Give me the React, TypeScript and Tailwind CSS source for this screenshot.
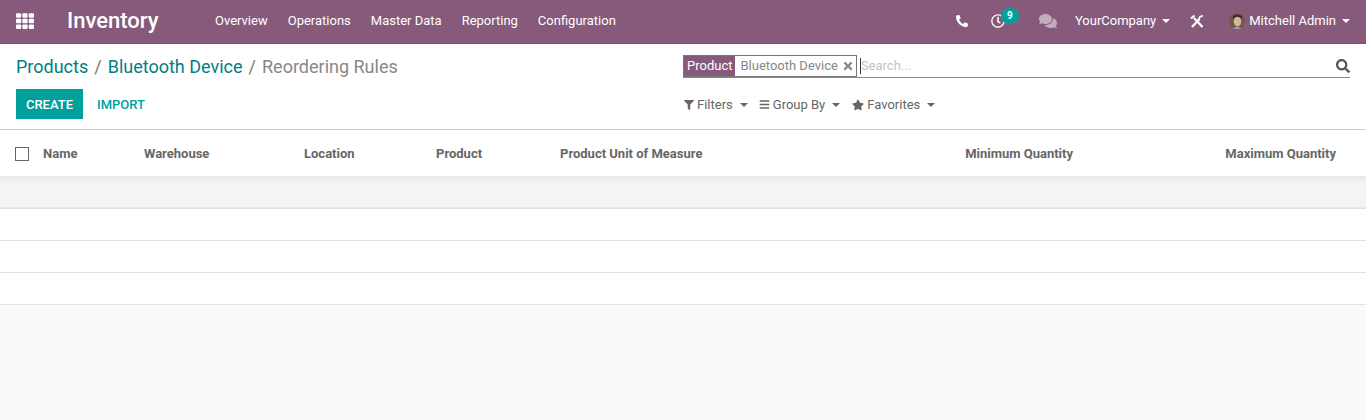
import { FaComments, FaFilter, FaBars, FaPhone, FaRegClock, FaSearch, FaStar, FaTh, FaTimes } from "react-icons/fa";

const menus = ["Overview", "Operations", "Master Data", "Reporting", "Configuration"];

function Caret({ className }: { className?: string }) {
  return <span className={`inline-block w-0 h-0 border-x-[4px] border-x-transparent border-t-[4px] ${className ?? ""}`} />;
}

function ToolsIcon() {
  return (
    <svg viewBox="0 0 14 14" className="w-[14px] h-[14px]" fill="none" stroke="white">
      <path d="M2 13 L9.5 5" strokeWidth="2.4" />
      <path d="M4 4 L12.5 13" strokeWidth="2.4" />
      <path d="M1 4.5 L4.5 1.5" strokeWidth="2.2" />
      <path d="M9 5.5 Q9 2 13 1.8" strokeWidth="1.8" />
    </svg>
  );
}

function Avatar() {
  return (
    <svg viewBox="0 0 16 16" className="w-4 h-4 rounded-full">
      <circle cx="8" cy="8" r="8" fill="#6b5a4c" />
      <ellipse cx="8.5" cy="8.5" rx="3.8" ry="5" fill="#d8b49a" />
      <path d="M4 6 Q8 1.5 13 6 L13 3 Q8 0 4 3 Z" fill="#3a2c22" />
      <path d="M2 16 Q8 12 14 16 Z" fill="#9fb2b5" />
    </svg>
  );
}

export default function App() {
  return (
    <div className="min-h-[420px] bg-[#f9f9f9] font-['Roboto',sans-serif] text-[13px] text-[#666666]">
      <header className="h-[44px] pb-[2px] bg-[#875a7b] border-b border-[#7a5170] flex items-center text-white">
        <FaTh className="ml-4 w-[18px] h-[18px]" />
        <span className="ml-[33px] w-[92px] text-[22px] leading-none font-medium whitespace-nowrap">Inventory</span>
        <nav className="ml-[56px] flex gap-[20px] text-[13px]">
          {menus.map((m) => (
            <span key={m}>{m}</span>
          ))}
        </nav>
        <div className="ml-auto flex items-center">
          <FaPhone className="w-3 h-3 -scale-x-100 mr-[23px]" />
          <span className="relative mr-[34px]">
            <FaRegClock className="w-[14px] h-[14px]" />
            <span className="absolute -top-[6px] left-[10px] w-[18px] h-[16px] rounded-full bg-[#00a09d] text-[10px] font-bold flex items-center justify-center">9</span>
          </span>
          <FaComments className="w-[18px] h-[18px] text-white/50 mr-[18px]" />
          <span>YourCompany</span>
          <Caret className="ml-[6px] border-t-white" />
          <span className="ml-[20px]"><ToolsIcon /></span>
          <span className="ml-[25px]"><Avatar /></span>
          <span className="ml-1">Mitchell Admin</span>
          <Caret className="ml-[6px] mr-[16px] border-t-white" />
        </div>
      </header>

      <section className="h-[86px] bg-white border-b border-[#cccccc] flex pl-4 pr-4">
        <div className="w-[667px] shrink-0">
          <div className="h-[45px] flex items-center text-[18px] gap-[6px]">
            <span className="text-[#017e84]">Products</span>
            <span className="text-[#777777]">/</span>
            <span className="text-[#017e84]">Bluetooth Device</span>
            <span className="text-[#777777]">/</span>
            <span className="text-[#888888]">Reordering Rules</span>
          </div>
          <div className="flex items-center h-[30px]">
            <button className="h-[30px] w-[67px] pt-px bg-[#00a09d] text-white text-[13px] font-medium">CREATE</button>
            <button className="ml-[14px] pt-px text-[#00a09d] text-[13px] font-medium">IMPORT</button>
          </div>
        </div>
        <div className="flex-1 min-w-0">
          <div className="mt-[10px] h-[24px] border-b border-[#888888] flex items-center">
            <span className="h-[22px] flex border border-[#777777] pt-px">
              <span className="bg-[#875a7b] -mt-px text-white px-[3px] flex items-center">Product</span>
              <span className="pl-[5px] pr-[2px] flex items-center gap-[4px] text-[#888888]">
                Bluetooth Device
                <FaTimes className="w-[12px] h-[12px]" />
              </span>
            </span>
            <span className="ml-[3px] border-l border-[#333333] h-[16px] leading-[16px] text-[#c4c4c4]">Search...</span>
            <FaSearch className="ml-auto w-[14px] h-[14px] text-[#555555]" />
          </div>
          <div className="mt-[17px] flex items-center">
            <FaFilter className="w-[10px] h-[10px] ml-px" />
            <span className="ml-[3px]">Filters</span>
            <Caret className="ml-[7px] border-t-[#666666]" />
            <FaBars className="ml-[11px] w-[11px] h-[11px]" />
            <span className="ml-[3px]">Group By</span>
            <Caret className="ml-[7px] border-t-[#666666]" />
            <FaStar className="ml-[12px] w-[12px] h-[12px]" />
            <span className="ml-[3px]">Favorites</span>
            <Caret className="ml-[7px] border-t-[#666666]" />
          </div>
        </div>
      </section>

      <table className="w-full table-fixed bg-white border-collapse">
        <thead>
          <tr className="h-[46px] font-bold text-[#666666] [&>th]:pt-[2px]">
            <th className="w-[43px] pl-[15px] text-left font-normal">
              <span className="block w-[14px] h-[14px] border border-[#666666]" />
            </th>
            <th className="w-[101px] text-left">Name</th>
            <th className="w-[160px] text-left">Warehouse</th>
            <th className="w-[132px] text-left">Location</th>
            <th className="w-[124px] text-left">Product</th>
            <th className="w-[330px] text-left">Product Unit of Measure</th>
            <th className="w-[183px] text-right">Minimum Quantity</th>
            <th className="pr-[30px] text-right">Maximum Quantity</th>
          </tr>
        </thead>
        <tbody>
          <tr className="h-[32px] bg-linear-to-b from-[#e9e9e9] to-[#f4f4f4] to-[25%] border-b border-[#e2e2e2]"><td colSpan={8} /></tr>
          <tr className="h-[32px] border-b border-[#e2e2e2]"><td colSpan={8} /></tr>
          <tr className="h-[32px] border-b border-[#e2e2e2]"><td colSpan={8} /></tr>
          <tr className="h-[32px] border-b border-[#e2e2e2]"><td colSpan={8} /></tr>
        </tbody>
      </table>
    </div>
  );
}
